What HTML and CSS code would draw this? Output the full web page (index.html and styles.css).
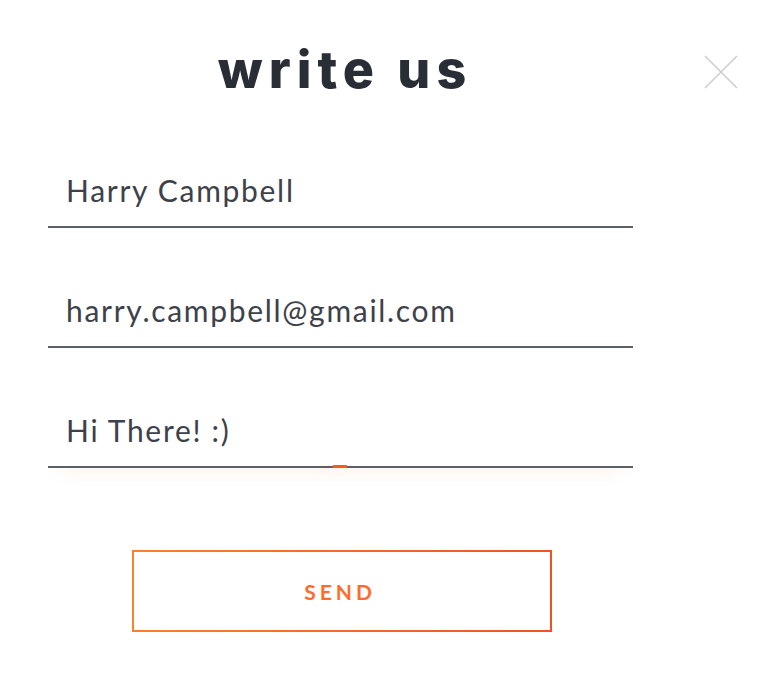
FILE: index.html
```html
<!DOCTYPE html>
<html>
<head>
<meta charset="utf-8">
<link rel="stylesheet" href="styles.css">
</head>
<body>
<div class="modal">
  <button class="close" aria-label="Close">
    <svg width="36" height="36" viewBox="0 0 36 36"><path d="M2 2 L34 34 M34 2 L2 34" stroke="#cfcfcf" stroke-width="1.6" fill="none"/></svg>
  </button>
  <div class="form">
    <h1 class="title">write us</h1>
    <div class="field"><span class="value">Harry Campbell</span></div>
    <div class="field"><span class="value">harry.campbell@gmail.com</span></div>
    <div class="field field-active"><span class="value">Hi There! :)</span><span class="marker"></span></div>
    <div class="actions"><button class="send">SEND</button></div>
  </div>
</div>
</body>
</html>
```
FILE: styles.css
```css
* { box-sizing: border-box; }
html, body { margin: 0; padding: 0; background: #fff; }
body { width: 770px; height: 687px; overflow: hidden; font-family: "Lato", "Liberation Sans", sans-serif; }
.modal { position: relative; width: 770px; height: 687px; }
.close { position: absolute; left: 703px; top: 54px; width: 36px; height: 36px; padding: 0; border: 0; background: none; }
.close svg { display: block; }
.form { width: 585px; margin-left: 48px; display: flex; flex-direction: column; }
.title { margin: 36px 0 0; height: 72px; padding-left: 9px; text-align: center; font-family: "Inter", "Lato", "Liberation Sans", sans-serif; font-weight: 800; font-size: 52px; letter-spacing: 6px; color: #292d35; line-height: 68px; }
.field { position: relative; height: 120px; border-bottom: 2px solid #5b5f66; display: flex; align-items: flex-end; padding: 0 0 16px 18px; }
.value { font-family: "Lato", "Liberation Sans", sans-serif; font-size: 30px; letter-spacing: 1.7px; color: #3d4149; line-height: 40px; }
.field-active { box-shadow: 0 16px 18px -14px rgba(255, 120, 40, 0.10); }
.marker { position: absolute; left: 285px; bottom: -2px; width: 14px; height: 3px; background: #ff5a14; }
.actions { display: flex; justify-content: center; padding: 82px 0 0 3px; }
.send { width: 420px; height: 82px; background: #fff; border: 2px solid; border-image: linear-gradient(90deg, #ff7f2c, #ef5420) 1; font-family: "Lato", "Liberation Sans", sans-serif; font-weight: 700; font-size: 21px; letter-spacing: 4px; color: #ff6b2c; padding: 0 4px 0 0; }
```
